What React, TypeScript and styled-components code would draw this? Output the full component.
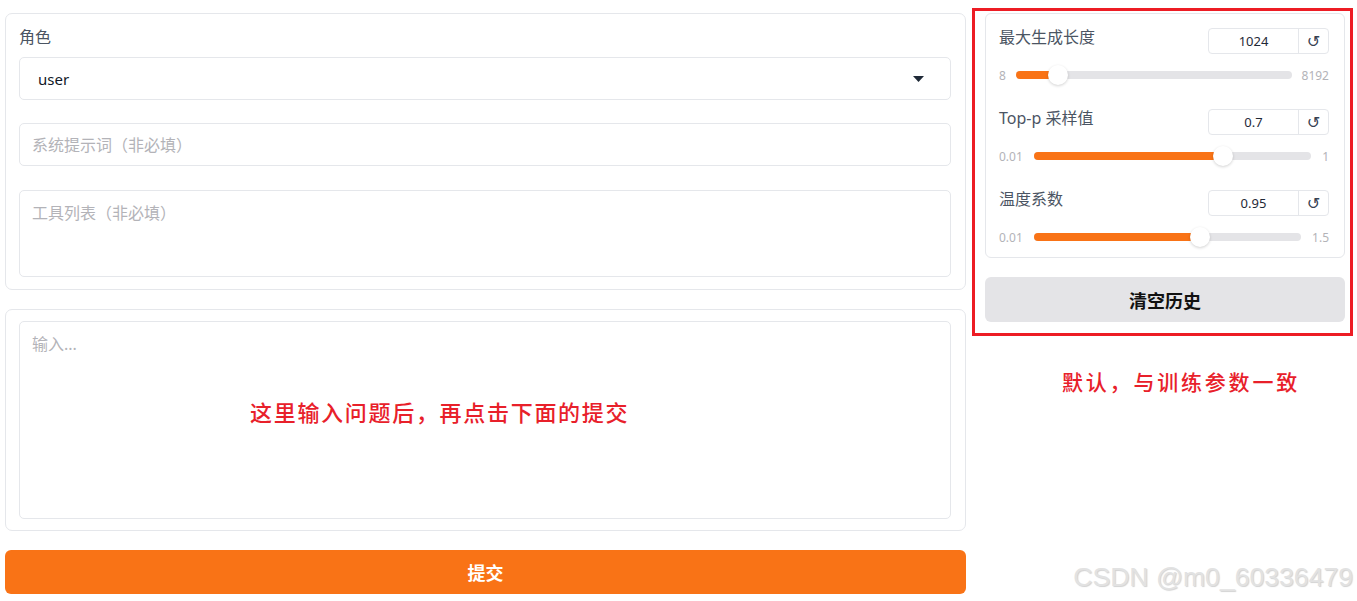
import React from 'react'
import styled, { createGlobalStyle } from 'styled-components'

const GlobalStyle = createGlobalStyle`
    html, body {
        margin: 0;
        padding: 0;
        background: #ffffff;
        height: 601px;
        overflow: hidden;
    }
    body {
        font-family: "Noto Sans", "Noto Sans CJK SC", sans-serif;
        color: #1f2937;
    }
`

const Page = styled.div`
    position: relative;
    display: flex;
    align-items: flex-start;
    gap: 6px;
    padding: 8px 4px 0 5px;
    height: 601px;
    box-sizing: border-box;
`

const LeftColumn = styled.div`
    width: 961px;
    margin-top: 5px;
    display: flex;
    flex-direction: column;
`

const Card = styled.div<{ $pad: string }>`
    position: relative;
    border: 1px solid #e5e7eb;
    border-radius: 7px;
    padding: ${(p) => p.$pad};
    display: flex;
    flex-direction: column;
    background: #fff;
`

const FieldLabel = styled.div`
    font-size: 16px;
    line-height: 20px;
    color: #4b5563;
    margin-bottom: 10px;
`

const Select = styled.div`
    height: 43px;
    box-sizing: border-box;
    border: 1px solid #e5e7eb;
    border-radius: 5px;
    display: flex;
    align-items: center;
    justify-content: space-between;
    padding: 0 26px 0 18px;
    font-size: 15px;
    color: #111827;
`

const TextInput = styled.input`
    height: 43px;
    box-sizing: border-box;
    border: 1px solid #e5e7eb;
    border-radius: 5px;
    padding: 0 12px;
    font-family: inherit;
    font-size: 16px;
    outline: none;
    margin-top: 23px;

    &::placeholder {
        color: #b3b3b8;
    }
`

const TextArea = styled.textarea<{ $h: number; $mt: number }>`
    height: ${(p) => p.$h}px;
    box-sizing: border-box;
    border: 1px solid #e5e7eb;
    border-radius: 5px;
    padding: 12px 12px;
    font-family: inherit;
    font-size: 16px;
    line-height: 20px;
    resize: none;
    outline: none;
    margin-top: ${(p) => p.$mt}px;

    &::placeholder {
        color: #b3b3b8;
    }
`

const Annotation = styled.div`
    color: #e8202a;
    font-family: "Noto Sans CJK SC", sans-serif;
    font-size: 22px;
    font-weight: 500;
    letter-spacing: 1.7px;
    line-height: 30px;
    white-space: nowrap;
`

const InputAnnotation = styled(Annotation)`
    position: absolute;
    left: 244px;
    top: 86px;
`

const PrimaryButton = styled.button`
    margin-top: 19px;
    height: 44px;
    border: none;
    border-radius: 6px;
    background: #f97316;
    color: #fff;
    font-family: "Noto Sans CJK SC", sans-serif;
    font-size: 18px;
    font-weight: 700;
`

const RightColumn = styled.div`
    display: flex;
    flex-direction: column;
`

const RedFrame = styled.div`
    width: 381px;
    box-sizing: border-box;
    border: 3px solid #ed1c24;
    padding: 2px 5px 11px 10px;
    display: flex;
    flex-direction: column;
    gap: 19px;
`

const SettingsCard = styled.div`
    border: 1px solid #e5e7eb;
    border-radius: 6px;
    padding: 14px 15px 10px 13px;
    display: flex;
    flex-direction: column;
    gap: 24px;
`

const SliderBlock = styled.div`
    display: flex;
    flex-direction: column;
`

const SliderHeader = styled.div`
    display: flex;
    justify-content: space-between;
    align-items: flex-start;
`

const SliderLabel = styled.div`
    font-size: 16px;
    line-height: 18px;
    color: #4b5563;
`

const NumberBox = styled.div`
    display: flex;
    height: 26px;
    box-sizing: border-box;
    border: 1px solid #e5e7eb;
    border-radius: 4px;
`

const NumberValue = styled.div`
    width: 89px;
    display: flex;
    align-items: center;
    justify-content: center;
    font-size: 13px;
    color: #1f2937;
    border-right: 1px solid #e5e7eb;
`

const ResetButton = styled.div`
    width: 29px;
    display: flex;
    align-items: center;
    justify-content: center;
    font-family: "DejaVu Sans", sans-serif;
    font-size: 16px;
    color: #374151;
`

const SliderRow = styled.div<{ $gap: number }>`
    display: flex;
    align-items: center;
    gap: ${(p) => p.$gap}px;
    height: 20px;
    margin-top: 11px;
`

const RangeText = styled.span`
    font-size: 12px;
    color: #b3b3b8;
`

const Track = styled.div`
    position: relative;
    flex: 1;
    height: 8px;
    border-radius: 4px;
    background: #e4e4e7;
`

const Fill = styled.div`
    position: absolute;
    left: 0;
    top: 0;
    bottom: 0;
    border-radius: 4px;
    background: #f97316;
`

const Thumb = styled.div`
    position: absolute;
    top: 50%;
    width: 20px;
    height: 20px;
    margin: -10px 0 0 -10px;
    border-radius: 50%;
    background: #fff;
    box-shadow: 0 1px 3px rgba(0, 0, 0, 0.18);
`

const GrayButton = styled.button`
    height: 45px;
    border: none;
    border-radius: 6px;
    background: #e4e4e7;
    color: #111;
    font-family: "Noto Sans CJK SC", sans-serif;
    font-size: 18px;
    font-weight: 700;
`

const NoteAnnotation = styled(Annotation)`
    font-size: 21px;
    letter-spacing: 2.8px;
    margin: 30px 0 0 90px;
`

const Watermark = styled.div`
    position: absolute;
    right: 4px;
    top: 562px;
    font-family: "Liberation Sans", Arial, sans-serif;
    font-size: 26.6px;
    line-height: 30px;
    color: #e2e2e2;
    text-shadow: 1px 1px 1px rgba(0, 0, 0, 0.18);
    white-space: nowrap;
`

const CaretDown = () => (
    <svg width="11" height="6" viewBox="0 0 11 6">
        <path d="M0 0 L11 0 L5.5 6 Z" fill="#1f2937" />
    </svg>
)

type SliderProps = {
    label: string
    value: number
    min: number
    max: number
    display: string
    gap: number
}

const SliderField: React.FC<SliderProps> = ({ label, value, min, max, display, gap }) => {
    const frac = (value - min) / (max - min)
    const pos = `calc(10px + (100% - 20px) * ${frac})`
    return (
        <SliderBlock>
            <SliderHeader>
                <SliderLabel>{label}</SliderLabel>
                <NumberBox>
                    <NumberValue>{display}</NumberValue>
                    <ResetButton>↺</ResetButton>
                </NumberBox>
            </SliderHeader>
            <SliderRow $gap={gap}>
                <RangeText>{min}</RangeText>
                <Track>
                    <Fill style={{ width: pos }} />
                    <Thumb style={{ left: pos }} />
                </Track>
                <RangeText>{max}</RangeText>
            </SliderRow>
        </SliderBlock>
    )
}

const App: React.FC = () => {
    return (
        <>
            <GlobalStyle />
            <Page>
                <LeftColumn>
                    <Card $pad="13px 14px 12px 13px">
                        <FieldLabel>角色</FieldLabel>
                        <Select>
                            <span>user</span>
                            <CaretDown />
                        </Select>
                        <TextInput placeholder="系统提示词（非必填）" />
                        <TextArea $h={87} $mt={24} placeholder="工具列表（非必填）" />
                    </Card>
                    <Card $pad="11px 14px 11px 13px" style={{ marginTop: 19 }}>
                        <TextArea $h={198} $mt={0} placeholder="输入..." />
                        <InputAnnotation>这里输入问题后，再点击下面的提交</InputAnnotation>
                    </Card>
                    <PrimaryButton>提交</PrimaryButton>
                </LeftColumn>
                <RightColumn>
                    <RedFrame>
                        <SettingsCard>
                            <SliderField label="最大生成长度" value={1024} min={8} max={8192} display="1024" gap={10} />
                            <SliderField label="Top-p 采样值" value={0.7} min={0.01} max={1} display="0.7" gap={11} />
                            <SliderField label="温度系数" value={0.95} min={0.01} max={1.5} display="0.95" gap={11} />
                        </SettingsCard>
                        <GrayButton>清空历史</GrayButton>
                    </RedFrame>
                    <NoteAnnotation>默认，与训练参数一致</NoteAnnotation>
                </RightColumn>
                <Watermark>CSDN @m0_60336479</Watermark>
            </Page>
        </>
    )
}

export default App
